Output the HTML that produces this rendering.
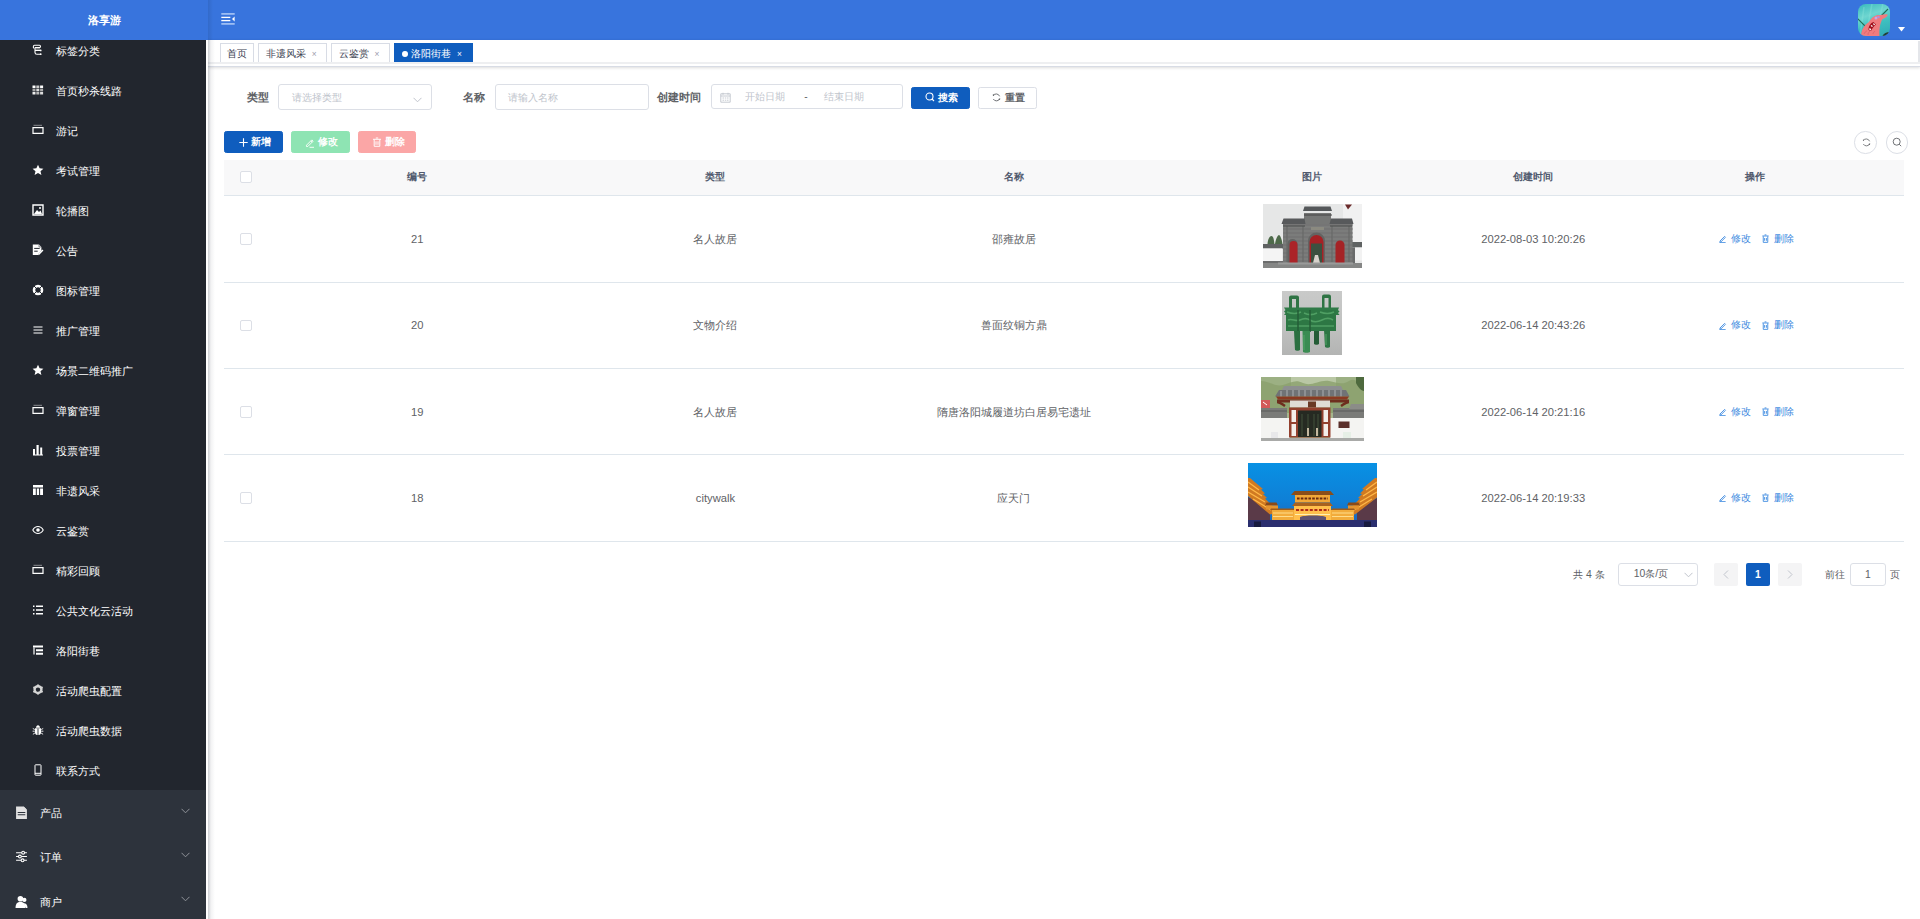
<!DOCTYPE html>
<html><head><meta charset="utf-8">
<style>
*{box-sizing:border-box;margin:0;padding:0}
html,body{width:1920px;height:919px;overflow:hidden;background:#fff;font-family:"Liberation Sans",sans-serif;}
.abs{position:absolute}
#side{position:absolute;left:0;top:0;width:206px;height:919px;background:#2d333c;overflow:hidden}
#sub{position:absolute;left:0;top:30px;width:206px;height:760px;background:#22262e}
.mi{position:absolute;left:0;width:206px;height:40px;line-height:40px;font-size:11.2px;color:#fff;font-weight:500}
.mi .t{position:absolute;left:56px;top:1px}
.mi svg{position:absolute;left:32px;top:14px;width:12px;height:12px}
.pi{position:absolute;left:0;width:206px;height:44.8px;line-height:44.8px;font-size:11.2px;color:#fff;font-weight:500}
.pi .t{position:absolute;left:40px;top:1px}
.pi svg.ic{position:absolute;left:15px;top:16px;width:13px;height:13px}
.pi svg.ar{position:absolute;left:181px;top:17.5px;width:9px;height:6px}
#logo{position:absolute;left:0;top:0;width:208px;height:40px;background:#3874dd;color:#fff;font-weight:bold;font-size:11.2px;line-height:40px;text-align:center}
#nav{position:absolute;left:208px;top:0;width:1712px;height:40px;background:linear-gradient(to right,rgba(0,0,0,.09),rgba(0,0,0,0) 5px),#3874dd}
#mainshadow{position:absolute;z-index:5;left:206px;top:40px;width:10px;height:879px;background:linear-gradient(to right,#fff 0,#fff 2px,rgba(0,10,30,.2) 2px,rgba(0,10,30,.05) 5px,rgba(0,10,30,0) 9px)}
#tags{position:absolute;left:208px;top:40px;width:1712px;height:27px;background:#fff;border-bottom:1px solid #d8dce5;box-shadow:0 1px 3px 0 rgba(0,0,0,.12),0 0 3px 0 rgba(0,0,0,.04)}
.tag{position:absolute;top:3px;height:19.2px;line-height:20px;border:1px solid #d8dce5;border-bottom:none;color:#3a4050;background:#fff;font-size:9.6px;padding:0 6.4px;white-space:nowrap}
.tag .x{display:inline-block;width:12.8px;text-align:center;color:#99a;font-size:8.4px;margin-left:2px;position:relative;top:.3px}
.tag.on{background:#0f5dbe;border-color:#0f5dbe;color:#fff}
.tag.on .x{color:#fff}
.tag.on .dot{display:inline-block;width:5.8px;height:5.8px;border-radius:50%;background:#fff;margin-right:3.6px;margin-left:.4px;vertical-align:.3px}
.lbl{position:absolute;font-size:11.2px;color:#606266;font-weight:bold;line-height:26.6px;top:84px}
.inp{position:absolute;top:84px;height:25.6px;border:1px solid #dcdfe6;border-radius:3px;background:#fff;font-size:10.2px;color:#c0c4cc;line-height:25px}
.btn{position:absolute;height:22.4px;line-height:20.4px;border-radius:2.4px;font-size:9.6px;color:#fff;text-align:center;border:1px solid transparent}
.th{position:absolute;top:159px;height:35.5px;line-height:35.5px;font-size:10.4px;font-weight:bold;color:#515a6e;text-align:center}
.td{position:absolute;font-size:11.2px;color:#606266;text-align:center}
.hl{position:absolute;left:224px;width:1680px;height:1px;background:#dfe6ec}
.cb{position:absolute;left:240px;width:11.8px;height:11.8px;border:1px solid #dcdfe6;border-radius:2px;background:#fff}
.op{position:absolute;left:1716px;width:100px;height:18px;font-size:10px;color:#3d8ae0;white-space:nowrap}
.op svg{position:absolute;top:4.5px}
.op span{position:absolute;top:0}

</style></head><body>
<div id="side">
  <div id="sub"></div>
<div class="mi" style="top:30px"><svg viewBox="0 0 12 12"><path d="M2.2 4.2C1 4.2 1 1.2 2.5 1.2H7.5C8.8 1.2 8.8 3.6 7.5 3.6H3" fill="none" stroke="#fff" stroke-width="1.1"/><path d="M3 3.6V8.5C3 9.6 3.8 10.3 5 10.3H8.5M3 6.4H8.5" fill="none" stroke="#fff" stroke-width="1.1"/><circle cx="8.7" cy="6.4" r=".9" fill="#fff"/><circle cx="8.7" cy="10.2" r=".9" fill="#fff"/><path d="M3.5 4.9h4.5" stroke="#bbb" stroke-width=".7"/></svg><span class="t">标签分类</span></div>
<div class="mi" style="top:70px"><svg viewBox="0 0 12 12"><path d="M.5 1.5h3v2.6h-3z" fill="#fff"/><path d="M4.3 1.5h3v2.6h-3z" fill="#ccc"/><path d="M8.1 1.5h3v2.6h-3z" fill="#fff"/><path d="M.5 4.7h3v2.6h-3z" fill="#aaa"/><path d="M4.3 4.7h3v2.6h-3z" fill="#ddd"/><path d="M8.1 4.7h3v2.6h-3z" fill="#aaa"/><path d="M.5 7.9h3v2.6h-3z" fill="#eee"/><path d="M4.3 7.9h3v2.6h-3z" fill="#bbb"/><path d="M8.1 7.9h3v2.6h-3z" fill="#ddd"/></svg><span class="t">首页秒杀线路</span></div>
<div class="mi" style="top:110px"><svg viewBox="0 0 12 12"><path d="M1.5 1.3h8.5" stroke="#fff" stroke-width=".8" opacity=".6"/><path d="M1 3.6h10v5.8H1z" fill="none" stroke="#fff" stroke-width="1.2"/></svg><span class="t">游记</span></div>
<div class="mi" style="top:150px"><svg viewBox="0 0 12 12"><path d="M6 .8l1.6 3.5 3.8.4-2.9 2.5.9 3.8L6 9 2.6 11l.9-3.8L.6 4.7l3.8-.4z" fill="#fff"/></svg><span class="t">考试管理</span></div>
<div class="mi" style="top:190px"><svg viewBox="0 0 12 12"><path d="M1 1h10v10H1z" fill="none" stroke="#fff" stroke-width="1.4"/><path d="M2 10l3-4 2 2 1.5-1.5L10 10z" fill="#fff"/><circle cx="8" cy="4" r="1" fill="#fff"/></svg><span class="t">轮播图</span></div>
<div class="mi" style="top:230px"><svg viewBox="0 0 12 12"><path d="M.8 .6h6.2l2.4 2.4v3.5L6 10.2V11H.8z" fill="#fff"/><path d="M2.2 4.4h5.5M2.2 7.2h3.5" stroke="#22262e" stroke-width="1"/><path d="M6.3 10.6l4.6-4.6" stroke="#fff" stroke-width="1.5"/><path d="M7 .6v2.4h2.4" fill="none" stroke="#22262e" stroke-width=".5"/></svg><span class="t">公告</span></div>
<div class="mi" style="top:270px"><svg viewBox="0 0 12 12"><circle cx="6" cy="6" r="4" fill="none" stroke="#fff" stroke-width="2.6"/><path d="M2 2l2 2M10 2L8 4M2 10l2-2M10 10L8 8" stroke="#22262e" stroke-width="1"/></svg><span class="t">图标管理</span></div>
<div class="mi" style="top:310px"><svg viewBox="0 0 12 12"><path d="M1.5 3h9M1.5 6h9M1.5 9h9" stroke="#fff" stroke-width="1.1"/></svg><span class="t">推广管理</span></div>
<div class="mi" style="top:350px"><svg viewBox="0 0 12 12"><path d="M6 .8l1.6 3.5 3.8.4-2.9 2.5.9 3.8L6 9 2.6 11l.9-3.8L.6 4.7l3.8-.4z" fill="#fff"/></svg><span class="t">场景二维码推广</span></div>
<div class="mi" style="top:390px"><svg viewBox="0 0 12 12"><path d="M1.5 1.3h8.5" stroke="#fff" stroke-width=".8" opacity=".6"/><path d="M1 3.6h10v5.8H1z" fill="none" stroke="#fff" stroke-width="1.2"/></svg><span class="t">弹窗管理</span></div>
<div class="mi" style="top:430px"><svg viewBox="0 0 12 12"><path d="M1 5h2v6H1zM4.5 1h2.2v10H4.5zM8.2 3.5h2v7.5h-2z" fill="#fff"/><path d="M1 11h10" stroke="#fff"/></svg><span class="t">投票管理</span></div>
<div class="mi" style="top:470px"><svg viewBox="0 0 12 12"><path d="M1 1h10v10H1z" fill="#fff"/><path d="M1 4h10M4.3 4v7M7.6 4v7" stroke="#22262e" stroke-width="1"/></svg><span class="t">非遗风采</span></div>
<div class="mi" style="top:510px"><svg viewBox="0 0 12 12"><path d="M.8 6C2.5 3 4 2.5 6 2.5S9.5 3 11.2 6C9.5 9 8 9.5 6 9.5S2.5 9 .8 6z" fill="none" stroke="#fff" stroke-width="1.1"/><circle cx="6" cy="6" r="1.8" fill="#fff"/></svg><span class="t">云鉴赏</span></div>
<div class="mi" style="top:550px"><svg viewBox="0 0 12 12"><path d="M1.5 1.3h8.5" stroke="#fff" stroke-width=".8" opacity=".6"/><path d="M1 3.6h10v5.8H1z" fill="none" stroke="#fff" stroke-width="1.2"/></svg><span class="t">精彩回顾</span></div>
<div class="mi" style="top:590px"><svg viewBox="0 0 12 12"><path d="M1 1.5h1.5v1.5H1zM1 5.2h1.5v1.5H1zM1 9h1.5v1.5H1z" fill="#fff"/><path d="M4 2.2h7M4 6h7M4 9.8h7" stroke="#fff" stroke-width="1.4"/></svg><span class="t">公共文化云活动</span></div>
<div class="mi" style="top:630px"><svg viewBox="0 0 12 12"><path d="M1 1.5h10v2H1z" fill="#fff"/><path d="M2 3.5v7" stroke="#fff" stroke-width="1.2"/><path d="M4 5.2h7v2H4zM4 8.8h7v2H4z" fill="#fff"/></svg><span class="t">洛阳街巷</span></div>
<div class="mi" style="top:670px"><svg viewBox="0 0 12 12"><circle cx="6" cy="5.6" r="3.4" fill="none" stroke="#d4d4d4" stroke-width="2.4"/><path d="M6 .6v2M6 8.6v2M1.4 3.1l1.7 1M8.9 7.1l1.7 1M1.4 8.1l1.7-1M8.9 4.1l1.7-1" stroke="#d4d4d4" stroke-width="2"/></svg><span class="t">活动爬虫配置</span></div>
<div class="mi" style="top:710px"><svg viewBox="0 0 12 12"><path d="M3 4.2h6v4.5C9 10.5 7.6 11 6 11S3 10.5 3 8.7z" fill="#fff"/><path d="M4 3.8C4 2.3 5 1.2 6 1.2S8 2.3 8 3.8z" fill="#fff"/><path d="M6 4.5v6.5" stroke="#22262e" stroke-width=".9"/><path d="M.8 4.5l2 1M11.2 4.5l-2 1M.6 7.2h2.2M11.4 7.2H9.2M.9 10.3l2-1.3M11.1 10.3l-2-1.3" stroke="#fff" stroke-width=".9"/></svg><span class="t">活动爬虫数据</span></div>
<div class="mi" style="top:750px"><svg viewBox="0 0 12 12"><rect x="3" y=".8" width="6" height="10.4" rx=".6" fill="none" stroke="#fff" stroke-width="1"/><path d="M3 9.3h6" stroke="#fff" stroke-width="1"/></svg><span class="t">联系方式</span></div>
<div class="pi" style="top:790.0px"><svg class="ic" viewBox="0 0 12 12"><path d="M1 .5h7l3 3V12H1z" fill="#e2e2e2"/><path d="M2.5 6h7M2.5 8h7" stroke="#2d333c" stroke-width="1"/><path d="M8 .5v3h3" fill="#ddd"/></svg><span class="t">产品</span><svg class="ar" viewBox="0 0 9 6"><path d="M.5 .8L4.5 4.8 8.5 .8" fill="none" stroke="#909399" stroke-width="1"/></svg></div>
<div class="pi" style="top:834.4px"><svg class="ic" viewBox="0 0 12 12"><path d="M1 2.5h10M1 6h10M1 9.5h10" stroke="#fff" stroke-width="1"/><circle cx="7.5" cy="2.5" r="1.3" fill="#2d333c" stroke="#fff"/><circle cx="4.5" cy="6" r="1.3" fill="#2d333c" stroke="#fff"/><circle cx="7" cy="9.5" r="1.3" fill="#2d333c" stroke="#fff"/></svg><span class="t">订单</span><svg class="ar" viewBox="0 0 9 6"><path d="M.5 .8L4.5 4.8 8.5 .8" fill="none" stroke="#909399" stroke-width="1"/></svg></div>
<div class="pi" style="top:878.8px"><svg class="ic" viewBox="0 0 12 12"><circle cx="5" cy="3.5" r="2.6" fill="#fff"/><path d="M.5 12c0-4 1.5-5.5 4.5-5.5S9.5 8 9.5 12z" fill="#fff"/><circle cx="8.6" cy="4.5" r="2" fill="#fff"/><path d="M8 7.5c2.5 0 3.5 1.5 3.5 4.5H9.8" fill="#fff"/></svg><span class="t">商户</span><svg class="ar" viewBox="0 0 9 6"><path d="M.5 .8L4.5 4.8 8.5 .8" fill="none" stroke="#909399" stroke-width="1"/></svg></div>
</div>
<div id="logo">洛享游</div>
<div id="nav">
  <svg class="abs" style="left:13px;top:12px" width="15" height="14" viewBox="0 0 15 14">
    <path d="M0.3 1.9h13.4" stroke="#a9c6f5" stroke-width="1.6"/>
    <path d="M0.3 5.4h9" stroke="#fff" stroke-width="1.3"/>
    <path d="M0.3 8.6h9" stroke="#fff" stroke-width="1.3"/>
    <path d="M0.3 11.9h13.4" stroke="#a9c6f5" stroke-width="1.6"/>
    <path d="M13.6 4.6v4.8L11 7z" fill="#fff"/>
  </svg>
  <div class="abs" id="avatar" style="left:1650px;top:4px;width:32px;height:32px;border-radius:8px;overflow:hidden;background:linear-gradient(160deg,#38b9bd 0%,#6fd6d0 35%,#3fc0c0 60%,#2fa9b5 100%)">
    <svg width="32" height="32" viewBox="0 0 32 32">
      <path d="M6 3l-4 30M14 0l-6 32M25 0l-8 32" stroke="#8fe6dc" stroke-width="1.5" opacity=".35"/>
      <path d="M-1 14L8 23M30 5L19 16" stroke="#1f6d55" stroke-width="1.1"/>
      <path d="M3 33C3 26 6 21 11 18C14 13 17 11 21 11C24 11 27 9.5 29.5 10.5C30 12.5 27 14 24.5 15C22.5 18 21 24 21.5 33z" fill="#f07b7e"/>
      <path d="M10.5 26C10.5 22 12.5 19 15.5 18L18 20.5C16 22 14 24.5 13 27z" fill="#a0101c"/>
      <path d="M11.5 24.5l1.2 1.5M13 21.5l1.5 1M15.5 19.5l1 1.5" stroke="#fff" stroke-width="1.3"/>
      <circle cx="18" cy="14" r="1.5" fill="#c6a6e6"/><circle cx="20.5" cy="13" r="1.3" fill="#b190d8"/>
      <path d="M24 33c1-3 4-5 8-5v5z" fill="#253c36"/>
      <path d="M6 30c1-2 2-3 3-3M10 31c0-2 1-3 2-4M15 30c0-1 1-2 2-3" stroke="#d35e66" stroke-width=".6" fill="none"/>
    </svg>
  </div>
  <svg class="abs" style="left:1689.5px;top:26.8px" width="7" height="5" viewBox="0 0 7 5"><path d="M0 0h7L3.5 4.5z" fill="#fff"/></svg>
</div>
<div id="mainshadow"></div>
<div id="tags">
  <div class="abs" style="left:1710px;top:1px;width:1.5px;height:22px;background:#e4e6ea"></div>
  <div class="abs" style="left:0;top:22px;width:1712px;height:1.5px;background:#eeeff1"></div>
  <div class="tag" style="left:12px;padding:0 6px">首页</div>
  <div class="tag" style="left:50.3px;padding:0 5.6px 0 6.4px">非遗风采<span class="x">×</span></div>
  <div class="tag" style="left:123.2px;padding:0 5.8px 0 6.4px">云鉴赏<span class="x">×</span></div>
  <div class="tag on" style="left:186px"><span class="dot"></span>洛阳街巷<span class="x">×</span></div>
</div>

<!-- search form -->
<div class="lbl" style="left:247px">类型</div>
<div class="inp" style="left:278.4px;width:153.6px;padding-left:12.6px">请选择类型
  <svg class="abs" style="left:134px;top:11.5px" width="9" height="6" viewBox="0 0 9 6"><path d="M.5 .8L4.5 4.8 8.5 .8" fill="none" stroke="#c0c4cc" stroke-width="1"/></svg>
</div>
<div class="lbl" style="left:463px">名称</div>
<div class="inp" style="left:495.4px;width:153.2px;padding-left:12px">请输入名称</div>
<div class="lbl" style="left:656.8px">创建时间</div>
<div class="inp" style="left:711.2px;width:192px;height:24.8px;line-height:24.2px">
  <svg class="abs" style="left:8px;top:6.5px" width="11" height="11" viewBox="0 0 11 11"><path d="M.8 1.8h9.4v8.4H.8zM.8 4h9.4M3 .8v2M8 .8v2M2.5 6h1.5M4.8 6h1.5M7 6h1.5M2.5 8.2h1.5M4.8 8.2h1.5M7 8.2h1.5" fill="none" stroke="#c0c4cc" stroke-width=".9"/></svg>
  <span class="abs" style="left:32.5px;top:0.3px">开始日期</span>
  <span class="abs" style="left:92px;top:0;color:#606266">-</span>
  <span class="abs" style="left:111.5px;top:0.3px">结束日期</span>
</div>
<div class="btn" style="left:911.2px;top:86.6px;width:58.4px;background:#0f5dbe;border-color:#0f5dbe">
  <svg class="abs" style="left:13px;top:4.8px" width="10" height="10" viewBox="0 0 10 10"><circle cx="4.5" cy="4.5" r="3.5" fill="none" stroke="#fff" stroke-width="1.1"/><path d="M7 7l2 2" stroke="#fff" stroke-width="1.1"/></svg>
  <span class="abs" style="left:26px;top:0;font-weight:bold">搜索</span>
</div>
<div class="btn" style="left:978.4px;top:86.6px;width:58.4px;background:#fff;border-color:#dcdfe6;color:#606266">
  <svg class="abs" style="left:12.2px;top:5.3px" width="9" height="9" viewBox="0 0 9 9"><path d="M1.2 2.6A3.6 3.6 0 0 1 7.6 3.3M7.8 5.6A3.6 3.6 0 0 1 1.3 6" fill="none" stroke="#606266" stroke-width=".9"/><circle cx="1.5" cy="2.1" r=".8" fill="#606266"/><circle cx="7.4" cy="6.2" r=".8" fill="#606266"/></svg>
  <span class="abs" style="left:26px;top:0;font-weight:bold">重置</span>
</div>

<!-- toolbar buttons -->
<div class="btn" style="left:224px;top:131px;width:59.2px;background:#0f5dbe;border-color:#0f5dbe">
  <svg class="abs" style="left:13.8px;top:6px" width="9" height="9" viewBox="0 0 9 9"><path d="M4.5 .3v8.4M.3 4.5h8.4" stroke="#fff" stroke-width="1.1"/></svg>
  <span class="abs" style="left:26px;top:0;font-weight:bold">新增</span>
</div>
<div class="btn" style="left:291.2px;top:131px;width:59.2px;background:#8ee4b3;border-color:#8ee4b3">
  <svg class="abs" style="left:13.3px;top:5.5px" width="10" height="10" viewBox="0 0 10 10"><path d="M1.5 7.2L6.8 1.9l1.3 1.3-5.3 5.3H1.5zM5.8 2.9l1.3 1.3M4.5 9.3h4.5" fill="none" stroke="#fff" stroke-width=".9"/></svg>
  <span class="abs" style="left:26px;top:0;font-weight:bold">修改</span>
</div>
<div class="btn" style="left:358.4px;top:131px;width:57.6px;background:#fba6a6;border-color:#fba6a6">
  <svg class="abs" style="left:12.6px;top:5.3px" width="10" height="10" viewBox="0 0 10 10"><path d="M1 2.3h8M3.8 1h2.4M2.2 2.5v6.8h5.6V2.5M4 4.3v3.5M6 4.3v3.5" fill="none" stroke="#fff" stroke-width=".95"/></svg>
  <span class="abs" style="left:26px;top:0;font-weight:bold">删除</span>
</div>
<div class="abs" style="left:1854.4px;top:131.2px;width:22.4px;height:22.4px;border:1px solid #dcdfe6;border-radius:50%">
  <svg class="abs" style="left:6.2px;top:5.6px" width="9" height="9" viewBox="0 0 9 9"><path d="M1.2 2.6A3.6 3.6 0 0 1 7.6 3.3M7.8 5.6A3.6 3.6 0 0 1 1.3 6" fill="none" stroke="#606266" stroke-width=".8"/><circle cx="1.5" cy="2.1" r=".7" fill="#606266"/><circle cx="7.4" cy="6.2" r=".7" fill="#606266"/></svg>
</div>
<div class="abs" style="left:1885.6px;top:131.2px;width:22.4px;height:22.4px;border:1px solid #dcdfe6;border-radius:50%">
  <svg class="abs" style="left:5.5px;top:4.6px" width="10" height="10" viewBox="0 0 10 10"><circle cx="4.7" cy="4.7" r="3.5" fill="none" stroke="#606266" stroke-width=".9"/><path d="M7.2 7.2l2 2" stroke="#606266" stroke-width=".9"/></svg>
</div>

<!-- table -->
<div class="abs" style="left:224px;top:160px;width:1680px;height:35.5px;background:#f8f8f9"></div>
<div class="cb" style="top:171px"></div>
<div class="th" style="left:268px;width:298.3px">编号</div>
<div class="th" style="left:566.3px;width:298.3px">类型</div>
<div class="th" style="left:864.6px;width:298.3px">名称</div>
<div class="th" style="left:1162.9px;width:298.3px">图片</div>
<div class="th" style="left:1461.2px;width:144px">创建时间</div>
<div class="th" style="left:1605.2px;width:298.8px">操作</div>
<div class="hl" style="top:195px"></div>
<div class="cb" style="top:233.2px"></div>
<div class="td" style="left:268px;width:298.3px;top:229.8px;line-height:18px">21</div>
<div class="td" style="left:566.3px;width:298.3px;top:229.8px;line-height:18px">名人故居</div>
<div class="td" style="left:864.6px;width:298.3px;top:229.8px;line-height:18px">邵雍故居</div>
<div class="td" style="left:1461.2px;width:144px;top:229.8px;line-height:18px">2022-08-03 10:20:26</div>
<div class="abs" style="left:1262.9px;top:204.2px;line-height:0"><svg width="99" height="64" viewBox="0 0 99 64" preserveAspectRatio="none">
<rect width="99" height="64" fill="#e6e7e7"/>
<rect x="80" y="0" width="19" height="39" fill="#f1f1f1"/>
<path d="M82 .5l7 0-4 5z" fill="#6a2a2a"/>
<path d="M4.5 40c.5-5 2-8 4-8s2.5 4 3 8zM12 40c1-6 3-9 4-9s3 4 3.5 9z" fill="#4e6a4a"/>
<rect x="0" y="40" width="20" height="4.5" fill="#5f6262"/>
<rect x="0" y="44.5" width="19" height="12.5" fill="#f4f4f4"/>
<rect x="0" y="57" width="20" height="3" fill="#6b6c6c"/>
<rect x="89" y="38" width="10" height="5.5" fill="#5f6262"/>
<rect x="92" y="43.5" width="7" height="13" fill="#f2f2f2"/>
<rect x="89" y="43.5" width="3" height="16" fill="#6a6b6b"/>
<rect x="20" y="19" width="69.5" height="40.5" fill="#7b7c7b"/>
<path d="M20 21h70M20 25h70M20 29h70M20 33h70M20 37h70M20 41h70M20 45h70M20 49h70M20 53h70M20 57h70" stroke="#6a6b6a" stroke-width=".7"/>
<path d="M24 22v36M40 22v36M69 22v36M86 22v36" stroke="#686968" stroke-width="1.2"/>
<rect x="41" y="9" width="27" height="11" fill="#767776"/>
<path d="M40 7h29l-1.5-4.5H41.5z" fill="#55585a"/>
<path d="M41 11h28" stroke="#444" stroke-width="1"/>
<path d="M18.5 20h24l-1-5.5H20.5zM66.5 20h24l-1.5-5.5H68z" fill="#57595b"/>
<path d="M20 22h22M67 22h22" stroke="#4a4c4d" stroke-width="1"/>
<rect x="48" y="23" width="13" height="3" fill="#8b8a80"/>
<path d="M24.5 59V40a5 5 0 0 1 10 0v19z" fill="#626362"/>
<path d="M26.5 59V41a4 4 0 0 1 8 0v18z" fill="#ab2428"/>
<path d="M45 59V37a8.5 8.5 0 0 1 17 0v22z" fill="#636463"/>
<path d="M46.5 59V38a7 7 0 0 1 14 0v21z" fill="#a52125"/>
<path d="M48 59V39.5h11V59z" fill="#3c5040"/>
<path d="M50 59l2-8h3l2 8z" fill="#d8d2cc"/>
<path d="M72.5 59V41a4.5 4.5 0 0 1 9 0v18z" fill="#a52326"/>
<rect x="0" y="59" width="99" height="5" fill="#858685"/>
<rect x="15" y="58.5" width="75" height="2" fill="#999a99"/>
</svg></div>
<div class="op" style="top:229.8px;line-height:18px"><svg style="left:1.5px" width="9" height="9" viewBox="0 0 10 10"><path d="M2.2 7.8L7.3 2.7l1 1-5.1 5.1H2.2zM1.5 9.6h7" fill="none" stroke="#3d8ae0" stroke-width="1"/></svg><span style="left:15px">修改</span><svg style="left:44.5px" width="9" height="9" viewBox="0 0 10 10"><path d="M1.5 2.2h7M4 1h2M2.5 2.5v6.8h5V2.5M4 4.5v3M6 4.5v3" fill="none" stroke="#3d8ae0" stroke-width="1"/></svg><span style="left:57.5px">删除</span></div>
<div class="hl" style="top:281.5px"></div>
<div class="cb" style="top:319.6px"></div>
<div class="td" style="left:268px;width:298.3px;top:316.2px;line-height:18px">20</div>
<div class="td" style="left:566.3px;width:298.3px;top:316.2px;line-height:18px">文物介绍</div>
<div class="td" style="left:864.6px;width:298.3px;top:316.2px;line-height:18px">兽面纹铜方鼎</div>
<div class="td" style="left:1461.2px;width:144px;top:316.2px;line-height:18px">2022-06-14 20:43:26</div>
<div class="abs" style="left:1281.9px;top:291px;line-height:0"><svg width="60" height="64" viewBox="0 0 60 64" preserveAspectRatio="none">
<defs><linearGradient id="bg2" x1="0" y1="0" x2="0" y2="1"><stop offset="0" stop-color="#c9cac9"/><stop offset=".6" stop-color="#bfc0bf"/><stop offset="1" stop-color="#b3b4b3"/></linearGradient></defs>
<rect width="60" height="64" fill="url(#bg2)"/>
<path d="M7 18V6.5a2 2 0 0 1 2-2h6a2 2 0 0 1 2 2V18h-3V8h-4v10z" fill="#2f7444"/>
<path d="M40 17V5.5a2 2 0 0 1 2-2h5a2 2 0 0 1 2 2V17h-2.5V7h-4v10z" fill="#2f7444"/>
<path d="M2 16.5h55l-1 2.5 1.5 1.5-1.5 1.5 1.5 2H2l1.5-2L2 20.5 3.5 19z" fill="#2f7a47"/>
<path d="M4 19h50v21H4z" fill="#2d7744"/>
<path d="M5 21c5 2 10 2 14 0M22 22c4 2 9 2 13 0M38 21c5 2 10 2 14 0M6 29c4-2 8 2 12 0s7-2 10 0 8 2 12 0 8-2 11 0M6 35h46" stroke="#4f9f63" stroke-width="1.6" fill="none"/>
<path d="M16 19v22M28 19v22" stroke="#245e37" stroke-width="1.5"/>
<path d="M12 40h6v19c-1 1-4 1-5 0z" fill="#2b7041"/>
<path d="M20.5 40h7.5v21c-1 1-6 1-7 0z" fill="#3a8c52"/>
<path d="M32 40h5v13c-1 1-4 1-5 0z" fill="#245c36"/>
<path d="M42 39h6v17c-1 1-4 1-5 0z" fill="#2e7645"/>
<path d="M22 44v15M44 43v11" stroke="#52a468" stroke-width="1"/>
</svg></div>
<div class="op" style="top:316.2px;line-height:18px"><svg style="left:1.5px" width="9" height="9" viewBox="0 0 10 10"><path d="M2.2 7.8L7.3 2.7l1 1-5.1 5.1H2.2zM1.5 9.6h7" fill="none" stroke="#3d8ae0" stroke-width="1"/></svg><span style="left:15px">修改</span><svg style="left:44.5px" width="9" height="9" viewBox="0 0 10 10"><path d="M1.5 2.2h7M4 1h2M2.5 2.5v6.8h5V2.5M4 4.5v3M6 4.5v3" fill="none" stroke="#3d8ae0" stroke-width="1"/></svg><span style="left:57.5px">删除</span></div>
<div class="hl" style="top:368.0px"></div>
<div class="cb" style="top:405.9px"></div>
<div class="td" style="left:268px;width:298.3px;top:402.5px;line-height:18px">19</div>
<div class="td" style="left:566.3px;width:298.3px;top:402.5px;line-height:18px">名人故居</div>
<div class="td" style="left:864.6px;width:298.3px;top:402.5px;line-height:18px">隋唐洛阳城履道坊白居易宅遗址</div>
<div class="td" style="left:1461.2px;width:144px;top:402.5px;line-height:18px">2022-06-14 20:21:16</div>
<div class="abs" style="left:1261px;top:377px;line-height:0"><svg width="103" height="64" viewBox="0 0 103 64" preserveAspectRatio="none">
<rect width="103" height="64" fill="#a6b68e"/>
<path d="M0 0h103v36H0z" fill="#9cb083"/>
<path d="M30 0h45v10H30z" fill="#b9c7a4"/>
<path d="M0 4c8 0 14 6 22 4s12-6 20-2 18-4 26-2 14 4 20 0 10 2 15 6v26H0z" fill="#8ba06d" opacity=".8"/>
<path d="M95 0h8v14c-3 0-6-4-8-8z" fill="#4e6a3e"/>
<path d="M0 23h9v8H0z" fill="#d45a5a"/>
<path d="M2 25l4 3" stroke="#fff" stroke-width="1"/>
<path d="M0 31h26v10H0zM72 31h31v10H72z" fill="#7a7b78"/>
<path d="M0 34h26M72 34h31" stroke="#595a58" stroke-width="1.2"/>
<path d="M90 27h13v5H88z" fill="#8b8c88"/>
<path d="M0 41h29v20H0zM69 41h34v20H69z" fill="#f4f4f2"/>
<rect x="10" y="55" width="7" height="8" fill="#e8e8ea"/>
<rect x="77.5" y="44.5" width="11" height="6.5" fill="#5a2f2a"/>
<rect x="82" y="55" width="8" height="9" fill="#e6efe6"/>
<path d="M14 19.5l4-6.5h67l3.5 6.5z" fill="#707376"/>
<path d="M23 9h57l2 4H21z" fill="#8d8f90"/>
<path d="M20 14v6M26 13v7M32 13v7M38 13v7M44 13v7M50 13v7M56 13v7M62 13v7M68 13v7M74 13v7M80 13v7" stroke="#9da0a2" stroke-width="1.3"/>
<path d="M15 19.5h73l-2 3H17z" fill="#8a3a22"/>
<path d="M16 22.5h72v3H16z" fill="#6e2e1e"/>
<path d="M16 25c3 0 5 2 8 4M88 25c-3 0-5 2-8 4" stroke="#6e2e1e" stroke-width="2.5" fill="none"/>
<rect x="29" y="23.5" width="40" height="7" fill="#e0dcd6"/>
<rect x="47" y="24.5" width="8" height="6" fill="#6a3a26"/>
<rect x="28" y="30.5" width="41.5" height="30" fill="#93402e"/>
<rect x="30.5" y="33" width="4.5" height="12" fill="#f4eeea"/>
<rect x="30.5" y="47" width="4.5" height="12" fill="#f4eeea"/>
<rect x="62.5" y="33" width="4.5" height="12" fill="#f4eeea"/>
<rect x="62.5" y="47" width="4.5" height="12" fill="#f4eeea"/>
<rect x="37" y="33.5" width="23.5" height="26.5" fill="#262a22"/>
<path d="M41 37v22M47 37v22M53 37v22M57 37v22" stroke="#4a5a42" stroke-width=".8"/>
<rect x="46" y="51" width="2" height="8" fill="#c4b8a0"/><rect x="55" y="51" width="2" height="8" fill="#c4b8a0"/>
<rect x="0" y="61" width="103" height="3" fill="#a9aaa8"/>
</svg></div>
<div class="op" style="top:402.5px;line-height:18px"><svg style="left:1.5px" width="9" height="9" viewBox="0 0 10 10"><path d="M2.2 7.8L7.3 2.7l1 1-5.1 5.1H2.2zM1.5 9.6h7" fill="none" stroke="#3d8ae0" stroke-width="1"/></svg><span style="left:15px">修改</span><svg style="left:44.5px" width="9" height="9" viewBox="0 0 10 10"><path d="M1.5 2.2h7M4 1h2M2.5 2.5v6.8h5V2.5M4 4.5v3M6 4.5v3" fill="none" stroke="#3d8ae0" stroke-width="1"/></svg><span style="left:57.5px">删除</span></div>
<div class="hl" style="top:454.0px"></div>
<div class="cb" style="top:492.2px"></div>
<div class="td" style="left:268px;width:298.3px;top:488.9px;line-height:18px">18</div>
<div class="td" style="left:566.3px;width:298.3px;top:488.9px;line-height:18px">citywalk</div>
<div class="td" style="left:864.6px;width:298.3px;top:488.9px;line-height:18px">应天门</div>
<div class="td" style="left:1461.2px;width:144px;top:488.9px;line-height:18px">2022-06-14 20:19:33</div>
<div class="abs" style="left:1248px;top:463px;line-height:0"><svg width="129" height="64" viewBox="0 0 129 64" preserveAspectRatio="none">
<defs>
<linearGradient id="sky4" x1="0" y1="0" x2="0" y2="1"><stop offset="0" stop-color="#0891e4"/><stop offset=".6" stop-color="#0f7fd6"/><stop offset="1" stop-color="#2060b4"/></linearGradient>
</defs>
<rect width="129" height="64" fill="url(#sky4)"/>
<path d="M0 34l22 12v12H0z" fill="#5a3a48"/>
<path d="M129 35l-20 11v12h20z" fill="#5a3a48"/>
<path d="M0 15h2l13 11-2 .5 4 4-2 .5 4 4-2 .5 9 9v6l-4 1L0 33z" fill="#d07a22"/>
<path d="M0 19l11 8M0 24l14 9M0 29l17 10M5 36l18 11" stroke="#ffb848" stroke-width="1.3"/>
<path d="M129 15h-2l-13 11 2 .5-4 4 2 .5-4 4 2 .5-9 9v6l4 1 22-17z" fill="#d07a22"/>
<path d="M129 19l-11 8M129 24l-14 9M129 29l-17 10M124 36l-18 11" stroke="#ffb848" stroke-width="1.3"/>
<path d="M17 42.5l1.5-3h10l1.5 3z" fill="#8a4a18"/>
<rect x="18" y="42.5" width="12" height="4" fill="#e49430"/>
<path d="M99 42.5l1.5-3h10l1.5 3z" fill="#8a4a18"/>
<rect x="100" y="42.5" width="11" height="4" fill="#e49430"/>
<rect x="24" y="47" width="22" height="10" fill="#f2ac3c"/>
<rect x="83" y="47" width="23" height="10" fill="#f2ac3c"/>
<path d="M25 50h20M84 50h21M25 53.5h20M84 53.5h21" stroke="#ffdc8a" stroke-width="1"/>
<path d="M22 47h24l1-1.5H23zM83 47h24l-1-1.5H84z" fill="#9a5a1c"/>
<path d="M43 32l3.5-4h36l3.5 4z" fill="#8a4e1a"/>
<rect x="47" y="32" width="35" height="7.5" fill="#f2a838"/>
<path d="M49 35.5h31" stroke="#6a2a10" stroke-width="2" stroke-dasharray="2.6 1.2"/>
<path d="M44 43l3-3.5h35l3 3.5z" fill="#a8621e"/>
<rect x="46" y="43" width="37" height="14" fill="#ffbf4c"/>
<path d="M48 47h33" stroke="#b02818" stroke-width="1.8" stroke-dasharray="3 1.6"/>
<path d="M47 51.5h35" stroke="#fff0b0" stroke-width="1"/>
<path d="M52 54c4-2 22-2 26 0v3H52z" fill="#3a3a7a" opacity=".8"/>
<rect x="0" y="57" width="129" height="7" fill="#2a2e6e"/>
<rect x="6" y="58.5" width="7" height="5.5" fill="#171a3e"/><rect x="116" y="58.5" width="7" height="5.5" fill="#171a3e"/>
</svg></div>
<div class="op" style="top:488.9px;line-height:18px"><svg style="left:1.5px" width="9" height="9" viewBox="0 0 10 10"><path d="M2.2 7.8L7.3 2.7l1 1-5.1 5.1H2.2zM1.5 9.6h7" fill="none" stroke="#3d8ae0" stroke-width="1"/></svg><span style="left:15px">修改</span><svg style="left:44.5px" width="9" height="9" viewBox="0 0 10 10"><path d="M1.5 2.2h7M4 1h2M2.5 2.5v6.8h5V2.5M4 4.5v3M6 4.5v3" fill="none" stroke="#3d8ae0" stroke-width="1"/></svg><span style="left:57.5px">删除</span></div>
<div class="hl" style="top:540.7px"></div>
<!-- pagination -->
<div class="abs" style="left:1573px;top:563px;line-height:23px;font-size:10.4px;color:#606266">共 4 条</div>
<div class="inp" style="left:1618px;top:563px;width:80px;height:23px;line-height:20.4px;color:#606266;font-size:10.4px;text-align:center;padding-right:14px">10条/页
  <svg class="abs" style="left:65px;top:8px" width="9" height="6" viewBox="0 0 9 6"><path d="M.5 .8L4.5 4.8 8.5 .8" fill="none" stroke="#c0c4cc" stroke-width="1"/></svg>
</div>
<div class="abs" style="left:1714px;top:563px;width:24px;height:23px;background:#f4f4f5;border-radius:2px">
  <svg class="abs" style="left:9px;top:7px" width="6" height="9" viewBox="0 0 6 9"><path d="M5 .5L1 4.5 5 8.5" fill="none" stroke="#c0c4cc" stroke-width="1"/></svg>
</div>
<div class="abs" style="left:1746px;top:563px;width:24px;height:23px;background:#0f5dbe;border-radius:2px;color:#fff;font-weight:bold;font-size:10.4px;text-align:center;line-height:23px">1</div>
<div class="abs" style="left:1778px;top:563px;width:24px;height:23px;background:#f4f4f5;border-radius:2px">
  <svg class="abs" style="left:9px;top:7px" width="6" height="9" viewBox="0 0 6 9"><path d="M1 .5L5 4.5 1 8.5" fill="none" stroke="#c0c4cc" stroke-width="1"/></svg>
</div>
<div class="abs" style="left:1825px;top:563px;line-height:23px;font-size:10.4px;color:#606266">前往</div>
<div class="inp" style="left:1850.4px;top:563px;width:35.2px;height:23px;line-height:22.5px;color:#606266;font-size:10.4px;text-align:center">1</div>
<div class="abs" style="left:1889.6px;top:563px;line-height:23px;font-size:10.4px;color:#606266">页</div>


</body></html>
